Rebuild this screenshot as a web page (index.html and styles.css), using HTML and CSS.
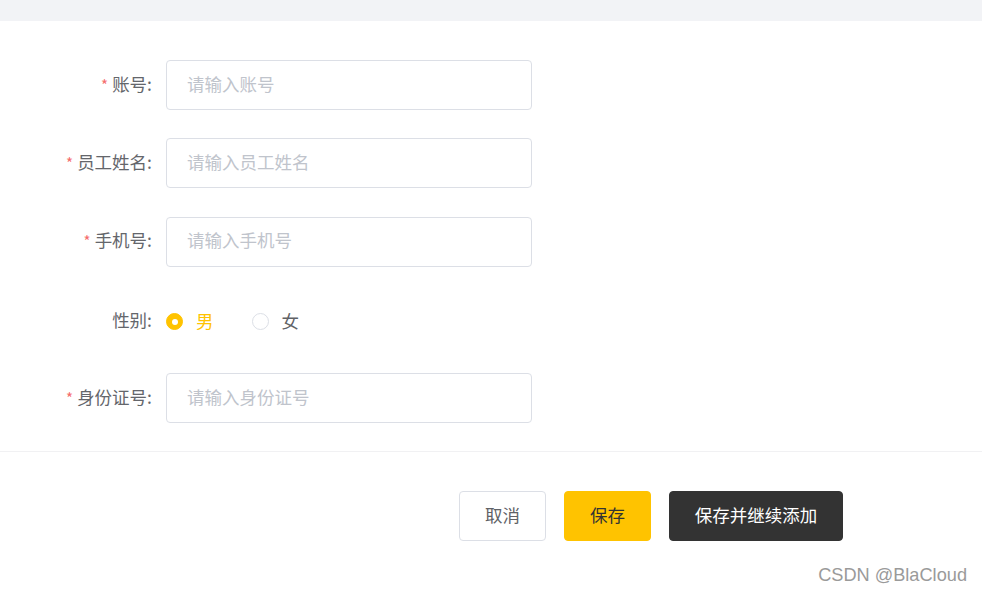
FILE: index.html
```html
<!DOCTYPE html>
<html lang="zh">
<head>
<meta charset="utf-8">
<link rel="stylesheet" href="styles.css">
</head>
<body>
<div class="topbar"></div>
<form class="form">
  <div class="row">
    <label class="label"><span class="req">*</span>账号:</label>
    <input class="input" type="text" placeholder="请输入账号">
  </div>
  <div class="row">
    <label class="label"><span class="req">*</span>员工姓名:</label>
    <input class="input" type="text" placeholder="请输入员工姓名">
  </div>
  <div class="row">
    <label class="label"><span class="req">*</span>手机号:</label>
    <input class="input" type="text" placeholder="请输入手机号">
  </div>
  <div class="row row-radio">
    <label class="label">性别:</label>
    <div class="radios">
      <span class="radio checked"><span class="dot"></span><span class="rtext">男</span></span>
      <span class="radio"><span class="dot"></span><span class="rtext">女</span></span>
    </div>
  </div>
  <div class="row">
    <label class="label"><span class="req">*</span>身份证号:</label>
    <input class="input" type="text" placeholder="请输入身份证号">
  </div>
</form>
<div class="divider"></div>
<div class="actions">
  <button class="btn btn-default" type="button">取消</button>
  <button class="btn btn-primary" type="button">保存</button>
  <button class="btn btn-dark" type="button">保存并继续添加</button>
</div>
<div class="watermark">CSDN @BlaCloud</div>
</body>
</html>
```
FILE: styles.css
```css
html, body {
  margin: 0;
  padding: 0;
  background: #ffffff;
  font-family: "Noto Sans CJK SC", "Noto Sans", sans-serif;
  width: 982px;
  height: 592px;
  overflow: hidden;
  position: relative;
}
.topbar {
  height: 21px;
  background: #f2f3f6;
}
.form {
  padding-top: 39px;
  display: flex;
  flex-direction: column;
  gap: 28.33px;
  margin: 0;
}
.row {
  display: flex;
  align-items: center;
  height: 50px;
  box-sizing: border-box;
}
.row-radio {
  padding-top: 4px;
}
.label {
  width: 152px;
  padding-right: 14px;
  padding-bottom: 4px;
  text-align: right;
  font-size: 17.5px;
  color: #64666b;
  box-sizing: content-box;
  white-space: nowrap;
}
.req {
  color: #f56c6c;
  font-size: 15px;
  margin-right: 4px;
}
.input {
  width: 366px;
  height: 50px;
  box-sizing: border-box;
  border: 1px solid #dcdfe6;
  border-radius: 4px;
  padding: 0 20px 4px 20px;
  font-family: inherit;
  font-size: 17.5px;
  color: #606266;
  outline: none;
  margin: 0;
}
.input::placeholder {
  color: #c0c4cc;
}
.radios {
  display: flex;
  align-items: center;
  gap: 38px;
}
.radio {
  display: flex;
  align-items: center;
  gap: 13px;
  font-size: 17.5px;
  color: #606266;
}
.rtext {
  padding-bottom: 3px;
}
.dot {
  width: 17px;
  height: 17px;
  box-sizing: border-box;
  border: 1px solid #dcdfe6;
  border-radius: 50%;
  background: #fff;
  display: flex;
  align-items: center;
  justify-content: center;
}
.radio.checked .dot {
  border-color: #ffc300;
  background: #ffc300;
}
.radio.checked .dot::after {
  content: "";
  width: 6px;
  height: 6px;
  border-radius: 50%;
  background: #fff;
}
.radio.checked .rtext {
  color: #ffc300;
}
.divider {
  margin-top: 28px;
  height: 1px;
  background: #f1f1f3;
}
.actions {
  display: flex;
  justify-content: flex-end;
  gap: 18px;
  padding-right: 139px;
  padding-top: 39px;
}
.btn {
  height: 50px;
  border-radius: 4px;
  font-family: inherit;
  font-size: 17.5px;
  border: 1px solid transparent;
  box-sizing: border-box;
  cursor: pointer;
  padding: 0 0 4px 0;
}
.btn-default {
  width: 87px;
  background: #fff;
  border-color: #dcdfe6;
  color: #606266;
}
.btn-primary {
  width: 87px;
  background: #ffc300;
  border-color: #ffc300;
  color: #333333;
}
.btn-dark {
  width: 174px;
  background: #333333;
  border-color: #333333;
  color: #ffffff;
}
.watermark {
  position: absolute;
  right: 15px;
  bottom: 6px;
  font-family: "Liberation Sans", Arial, sans-serif;
  font-size: 18.2px;
  color: #9a9a9a;
}
```
